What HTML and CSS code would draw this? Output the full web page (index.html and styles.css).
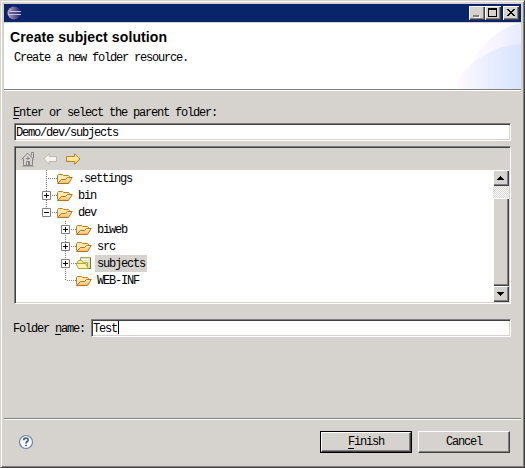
FILE: index.html
```
<!DOCTYPE html>
<html lang="en">
<head>
<meta charset="utf-8">
<title>Create subject solution</title>
<link rel="stylesheet" href="styles.css">
</head>
<body>
<svg class="defs" width="0" height="0">
  <defs>
    <linearGradient id="gold" x1="0" y1="0" x2="0" y2="1"><stop offset="0" stop-color="#fff3c4"/><stop offset="1" stop-color="#f6bd62"/></linearGradient>
    <linearGradient id="ball" x1="0" y1="0" x2="1" y2="0"><stop offset="0" stop-color="#e0aabd"/><stop offset=".35" stop-color="#8575a8"/><stop offset="1" stop-color="#29236c"/></linearGradient>
    <linearGradient id="arrow" x2="0" y2="1"><stop stop-color="#fffce0"/><stop offset="1" stop-color="#ffd05c"/></linearGradient>
    <symbol id="folder" viewBox="0 0 16 16">
      <path d="M.500 11.500V4.500L1.500 3.500H5.500L6.500 4.500H11.500L12.500 5.500V7" fill="#ffe9ad" stroke="#c47a22"/>
      <path d="M.500 12.500L4.500 8.500H8.500L10.500 6.500H15.200L11.500 12.500Z" fill="url(#gold)" stroke="#b87020"/>
    </symbol>
    <symbol id="project" viewBox="0 0 16 16">
      <path d="M4.500 1.500H14.500V12.500H4.500Z" fill="#e4e4bd" stroke="#a3a46c"/>
      <path d="M14.500 2V12.500H9" fill="none" stroke="#74763c"/>
      <path d="M6 3.500H12M8 5.500H13" stroke="#fff"/>
      <path d="M1.500 7V5.500L2.500 4.500H5.500L7.500 6.500H11.500V12.500H3.500Z" fill="#f5eb91" stroke="#b5a648"/>
      <path d="M-.200 7.500H9.500L12.500 12.500H2.500Z" fill="#fff6ab" stroke="#b3a23c"/>
    </symbol>
    <symbol id="stub" viewBox="0 0 15 17"><path d="M6 8.500H15" stroke="#808080" stroke-dasharray="1 1"/></symbol>
    <symbol id="plus" viewBox="0 0 15 17"><path d="M10 8.500H15" stroke="#808080" stroke-dasharray="1 1"/><path d="M.500 4.500H8.500V12.500H.500Z" fill="#fff" stroke="#808080"/><path d="M2 8.500H7M4.500 6V11" stroke="#000"/></symbol>
    <symbol id="minus" viewBox="0 0 15 17"><path d="M10 8.500H15" stroke="#808080" stroke-dasharray="1 1"/><path d="M.500 4.500H8.500V12.500H.500Z" fill="#fff" stroke="#808080"/><path d="M2 8.500H7" stroke="#000"/></symbol>
  </defs>
</svg>
<div class="window">
  <div class="titlebar">
    <svg class="logo" width="15" height="14" viewBox="0 0 15 14"><circle cx="7" cy="7" r="6.500" fill="url(#ball)"/><path d="M3 5.500H14M1 8.500H14" stroke="#b9c6e8"/><path d="M2 7H13" stroke="#443e80"/></svg>
    <div class="caption-buttons">
      <div class="cap"><svg width="16" height="14" shape-rendering="crispEdges"><path d="M5 10H11V12H5Z" fill="#fff"/><path d="M4 9H10V11H4Z" fill="#808080"/></svg></div>
      <div class="cap"><svg width="16" height="14" shape-rendering="crispEdges"><path d="M3 2H12V11H3ZM4 4V10H11V4Z" fill-rule="evenodd"/></svg></div>
      <div class="cap close"><svg width="16" height="14" shape-rendering="crispEdges"><path d="M4 3H6V4H7V5H9V4H10V3H12V4H11V5H10V6H9V7H10V8H11V9H12V10H10V9H9V8H7V9H6V10H4V9H5V8H6V7H7V6H6V5H5V4H4Z"/></svg></div>
    </div>
  </div>
  <div class="banner">
    <div class="heading"><h1>Create subject solution</h1><p>Create a new folder resource.</p></div>
    <svg width="63" height="66" viewBox="0 0 63 66">
      <defs>
        <linearGradient id="w1"><stop offset="0" stop-color="#fffaff"/><stop offset=".45" stop-color="#f8f5ff"/><stop offset="1" stop-color="#e7ecff"/></linearGradient>
        <linearGradient id="w2"><stop offset="0" stop-color="#fff9ff"/><stop offset=".5" stop-color="#e9eeff"/><stop offset="1" stop-color="#d9e3ff"/></linearGradient>
      </defs>
      <path d="M12 42C24 20 42 4 63 0V30L20 60Z" fill="url(#w1)"/>
      <path d="M0 66V56C14 36 38 22 63 21V66Z" fill="url(#w2)"/>
    </svg>
  </div>
  <div class="content">
    <label class="label"><u>E</u>nter or select the parent folder:</label>
    <div class="field parent">Demo/dev/subjects</div>
    <div class="tree">
      <div class="toolbar">
        <svg width="14" height="16" viewBox="0 0 14 16" fill="none" stroke="#858585"><path d="M10.500 4.500V1.500H12.500V7M.500 8.500L6.500 2L13 8.500M2.500 7.500V14.500H11.500V7.500M5.500 14V10.500H8.500V14M7.500 11V14M5 7.500H9M7 5.500V9"/><path d="M1 15.500H13" stroke="#b0b0b0"/></svg>
        <svg width="14" height="12" viewBox="0 0 14 12"><path d="M.700 6L6 .700V3.500H13.500V8.500H6V11.300Z" fill="#f5f3ee" stroke="#bbb8b0"/></svg>
        <svg class="forward" width="15" height="12" viewBox="0 0 15 12"><path d="M14 6L8.500 .700V3.500H.500V8.500H8.500V11.300Z" fill="url(#arrow)" stroke="#bd8218"/></svg>
      </div>
      <div class="view">
        <div class="nodes">
          <div class="trunk">
            <div class="node"><svg width="15" height="17"><use href="#stub"/></svg><svg width="16" height="16"><use href="#folder"/></svg><span>.settings</span></div>
            <div class="node"><svg width="15" height="17"><use href="#plus"/></svg><svg width="16" height="16"><use href="#folder"/></svg><span>bin</span></div>
            <div class="node"><svg width="15" height="17"><use href="#minus"/></svg><svg width="16" height="16"><use href="#folder"/></svg><span>dev</span></div>
          </div>
          <div class="trunk child">
            <div class="node"><svg width="15" height="17"><use href="#plus"/></svg><svg width="16" height="16"><use href="#folder"/></svg><span>biweb</span></div>
            <div class="node"><svg width="15" height="17"><use href="#plus"/></svg><svg width="16" height="16"><use href="#folder"/></svg><span>src</span></div>
            <div class="node"><svg width="15" height="17"><use href="#plus"/></svg><svg width="16" height="16"><use href="#project"/></svg><span class="selected">subjects</span></div>
            <div class="node"><svg width="15" height="17"><use href="#stub"/></svg><svg width="16" height="16"><use href="#folder"/></svg><span>WEB-INF</span></div>
          </div>
        </div>
        <div class="scrollbar">
          <div class="cap square"><svg width="16" height="16" shape-rendering="crispEdges"><path d="M7 6H8V7H9V8H10V9H11V10H4V9H5V8H6V7H7Z"/></svg></div>
          <div class="cap thumb"></div>
          <div class="cap square"><svg width="16" height="16" shape-rendering="crispEdges"><path d="M4 6H11V7H10V8H9V9H8V10H7V9H6V8H5V7H4Z"/></svg></div>
        </div>
      </div>
    </div>
    <div class="name-row"><label class="label">Folder <u>n</u>ame:</label><div class="field name">Test<i class="caret"></i></div></div>
  </div>
  <div class="footer">
    <svg width="16" height="16" viewBox="0 0 16 16"><circle cx="8" cy="8" r="6.500" fill="#fafbff" stroke="#6d80a8" stroke-width="1.200"/><path d="M5.700 6.300C5.700 3.400 10.300 3.500 10.200 6C10.200 7.500 8 7.600 8 9.600M8 10.700V12.200" fill="none" stroke="#405d94" stroke-width="1.700"/></svg>
    <div class="actions"><div class="button default"><div><u>F</u>inish</div></div><div class="button">Cancel</div></div>
  </div>
</div>
</body>
</html>
```
FILE: styles.css
```
* { box-sizing: border-box; }
body { margin: 0; font: 12px/16px "Liberation Mono", monospace; letter-spacing: -1.2px; color: #000; background: #d6d3ce; overflow: hidden; }
svg { display: block; flex: none; }
.defs { position: absolute; }
u { text-decoration: none; box-shadow: inset 0 -1px #000; display: inline-block; height: 14px; width: 6px; line-height: 16px; vertical-align: top; }
.window { width: 525px; height: 468px; border: 1px solid; border-color: #d6d3ce #404040 #404040 #d6d3ce; box-shadow: inset 1px 1px #fff, inset -1px -1px #808080; display: flex; flex-direction: column; padding: 3px 3px 1px 3px; }
.titlebar { height: 18px; background: #08246b; display: flex; justify-content: space-between; padding: 2px 2px 0 3px; }
.caption-buttons { display: flex; }
.cap { width: 16px; height: 14px; background: #d6d3ce; box-shadow: inset 1px 1px #fff, inset -1px -1px #404040, inset -2px -2px #808080; }
.close { margin-left: 2px; }
.banner { height: 69px; border-top: 1px solid #d6d3ce; border-bottom: 1px solid #fff; background: #fff; box-shadow: inset 0 -1px #808080; display: flex; justify-content: space-between; }
.heading { padding: 6px 0 0 6px; }
h1 { margin: 0; font: bold 14px/16px "Liberation Sans", sans-serif; letter-spacing: .1px; white-space: nowrap; }
p { margin: 5px 0 0 4px; }
.content { padding: 14px 10px 0; height: 327px; }
.label { display: block; height: 16px; white-space: nowrap; margin-left: -1px; }
.field { height: 18px; background: #fff; border: 1px solid; border-color: #808080 #fff #fff #808080; box-shadow: inset 1px 1px #404040, inset -1px -1px #d6d3ce; padding: 1px 0 0 1px; }
.parent { margin-top: 2px; }
.tree { height: 158px; margin-top: 5px; border: 1px solid; border-color: #808080 #fff #fff #808080; padding: 1px; box-shadow: inset 1px 1px #404040, inset -1px -1px #d6d3ce; }
.toolbar { height: 22px; display: flex; align-items: center; padding-left: 5px; gap: 8px; }
.forward { margin-left: 1px; }
.view { height: 132px; background: #fff; display: flex; }
.nodes { flex: 1; padding-left: 26px; }
.trunk { background: repeating-linear-gradient(#808080 0 1px, transparent 1px 2px) 4px 0 / 1px 42px no-repeat; }
.child { margin-left: 19px; background-size: 1px 60px; }
.node { height: 17px; display: flex; align-items: center; }
.node span { height: 17px; line-height: 16px; padding: 1px 2px 0; margin-left: 3px; }
.node span.selected { background: #d6d3ce; width: 52px; }
.scrollbar { width: 16px; display: flex; flex-direction: column; background: repeating-conic-gradient(#d6d3ce 0 25%, #fff 0 50%) 0 0 / 2px 2px; }
.square { height: 16px; }
.thumb { height: 88px; margin-top: 12px; }
.name-row { display: flex; margin-top: 15px; }
.name-row .label { width: 78px; padding-top: 2px; height: 18px; }
.name { flex: 1; display: flex; }
.caret { width: 1px; height: 13px; background: #000; margin: 0 0 0 1px; }
.footer { height: 48px; border-top: 1px solid #808080; box-shadow: inset 0 1px #fff; display: flex; justify-content: space-between; padding: 12px 11px 0 14px; }
.footer > svg { margin-top: 3px; }
.actions { display: flex; gap: 6px; }
.button { width: 92px; height: 22px; line-height: 20px; text-align: center; border: 1px solid; border-color: #fff #404040 #404040 #fff; box-shadow: inset -1px -1px #808080; }
.default { border-color: #000; box-shadow: none; }
.default > div { height: 20px; border: 1px solid; border-color: #fff #404040 #404040 #fff; box-shadow: inset -1px -1px #808080; line-height: 18px; }
.default u { line-height: 18px; height: 16px; }
```
